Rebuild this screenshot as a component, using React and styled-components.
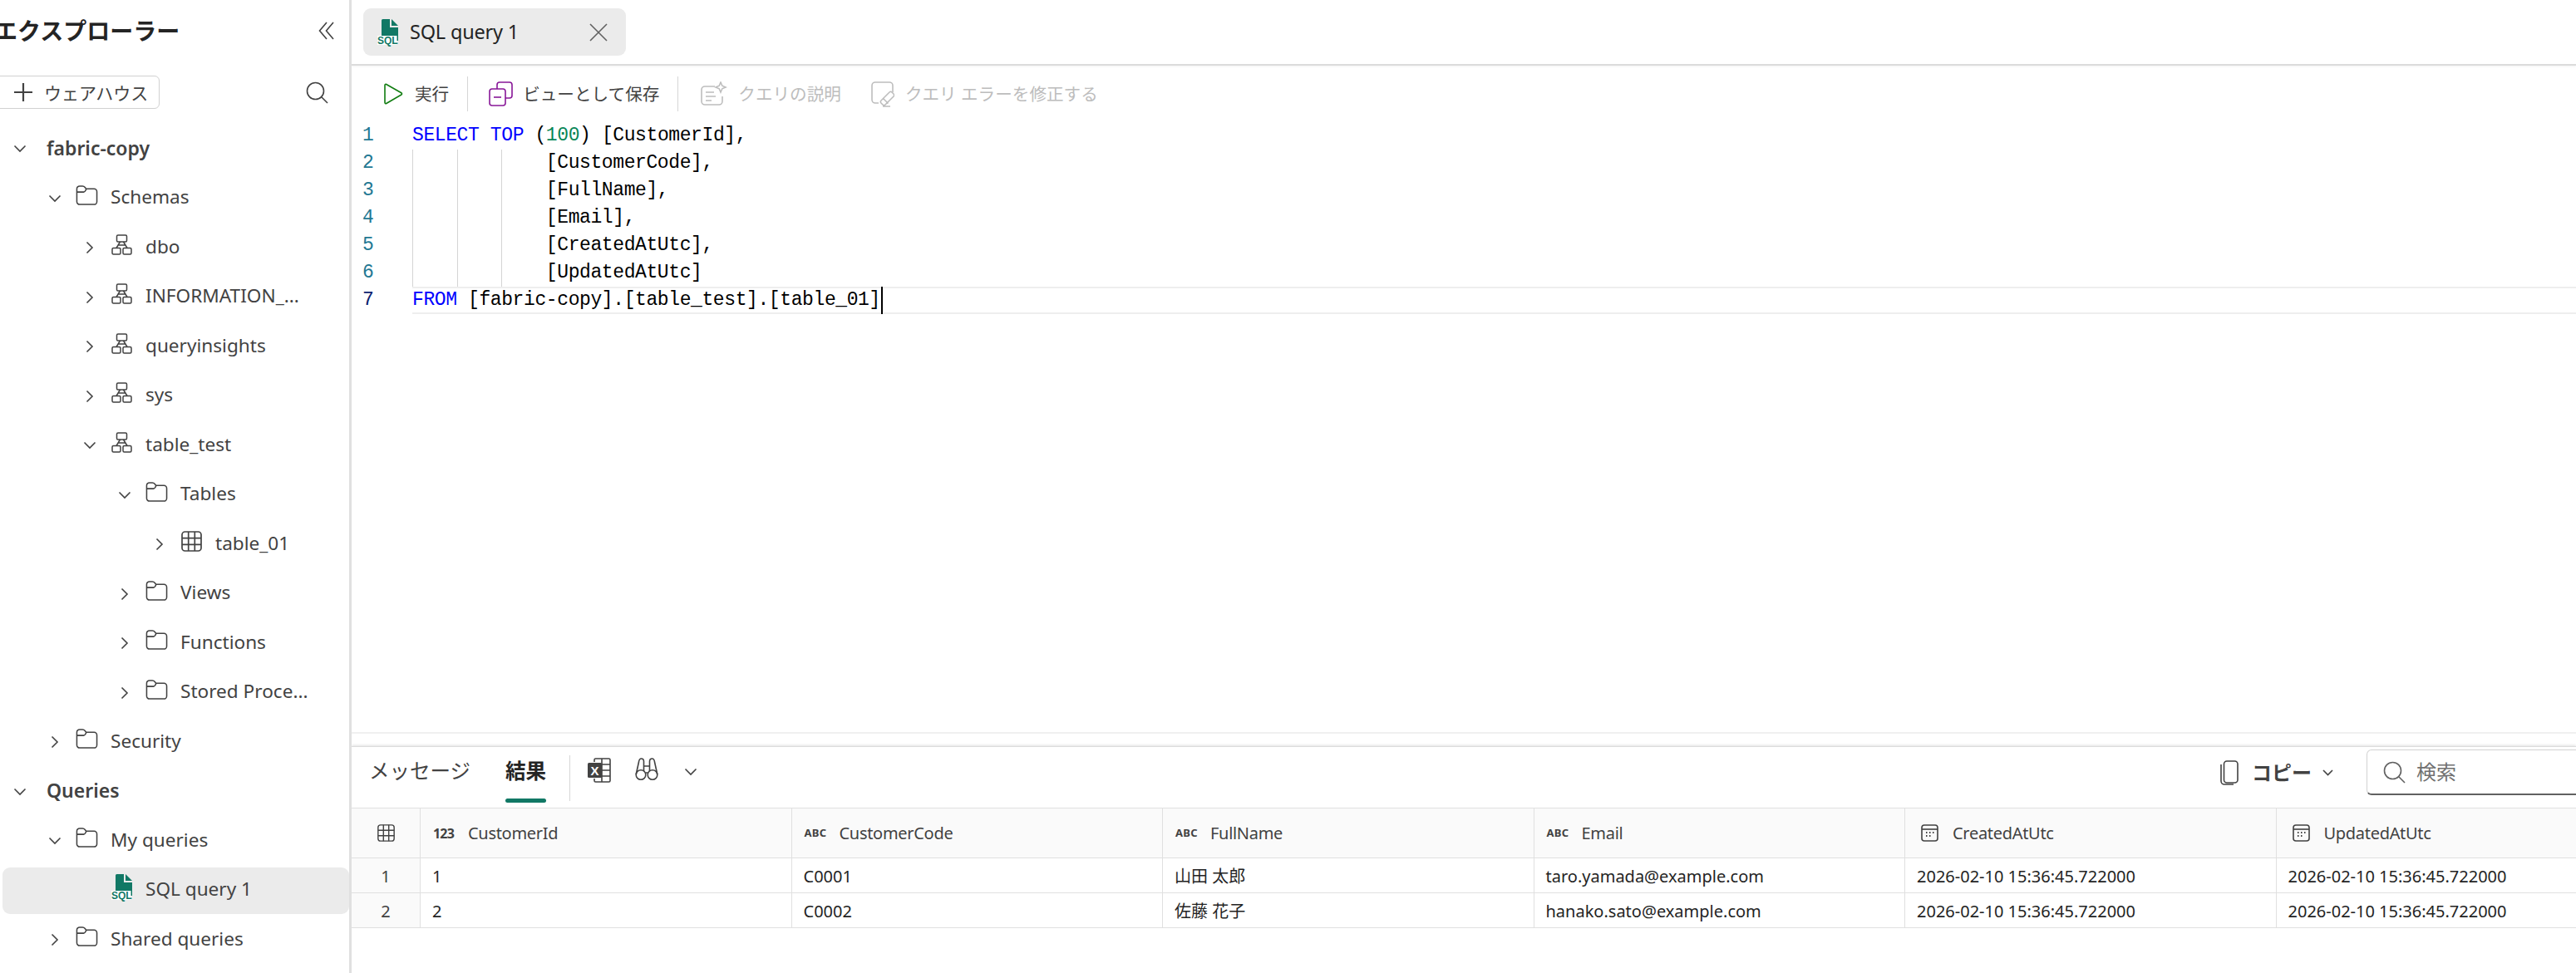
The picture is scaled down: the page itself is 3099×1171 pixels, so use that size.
import React from "react";
import styled, { createGlobalStyle } from "styled-components";

const UI = `"Noto Sans", "Noto Sans CJK JP", sans-serif`;
const MONO = `"Liberation Mono", "Noto Sans CJK JP", monospace`;

const Global = createGlobalStyle`
  html, body { margin: 0; padding: 0; height: 100%; overflow: hidden; background: #fff; }
  #root { height: 100%; }
  * { box-sizing: border-box; }
`;

const Page = styled.div`
  display: grid; grid-template-columns: 423px 1fr; width: 3099px; height: 1171px;
  overflow: hidden; font-family: ${UI}; color: #424242; background: #fff;
`;
const Sidebar = styled.aside`
  border-right: 3px solid #e0e0e0; display: flex; flex-direction: column; overflow: hidden;
`;
const SideHead = styled.div`
  height: 74px; display: flex; align-items: center; justify-content: space-between; padding-right: 18px;
`;
const Title = styled.h1`
  margin: 0 0 0 -7px; font-size: 28px; font-weight: 700; color: #242424; line-height: 1;
`;
const SideTools = styled.div`
  height: 75.5px; display: flex; align-items: center; justify-content: space-between; padding-right: 25px;
`;
const AddButton = styled.button`
  margin: -2px 0 0 -8px; width: 200px; height: 40px; padding: 0 0 0 24px; display: flex; align-items: center; gap: 14px;
  background: #fff; border: 1px solid #d1d1d1; border-radius: 6px; font: 400 21px ${UI}; color: #424242;
`;
const Row = styled.div`
  height: 59.5px; display: flex; align-items: center; flex: none;
  padding-left: ${p => 9 + p.$level * 42}px;
  ${p => p.$selected ? `margin: 1.75px 0 1.75px 3px; padding-left: ${6 + p.$level * 42}px; background: #ebebeb; border-radius: 9px; height: 56px;` : ""}
`;
const ChevronSlot = styled.span`
  width: 30px; height: 30px; display: flex; align-items: center; justify-content: center; flex: none;
`;
const IconSlot = styled.span`
  width: 27px; margin: 0 15px 0 10px; display: flex; justify-content: center; flex: none; transform: translateY(-4px);
`;
const RowLabel = styled.span`
  font-size: ${p => (p.$strong ? 23 : 22.6)}px; line-height: 1; color: #424242; white-space: nowrap;
  font-weight: ${p => (p.$strong ? 600 : 400)};
  margin-left: ${p => (p.$bare ? 17 : 0)}px;
  transform: translateY(-1px);
`;

const Main = styled.main` display: flex; flex-direction: column; min-width: 0; overflow: hidden; `;
const TabBar = styled.div`
  height: 79px; flex: none; display: flex; align-items: flex-start; padding: 10px 0 0 14px;
  border-bottom: 2px solid #dcdcdc; box-shadow: 0 1px 2px rgba(0,0,0,.06);
`;
const DocTab = styled.div`
  width: 316px; height: 57px; background: #ebebeb; border-radius: 9px; display: flex; align-items: center; padding: 0 22px 0 17px;
`;
const DocTabName = styled.span`
  font-size: 23.5px; letter-spacing: -0.2px; color: #242424; margin-left: 13px; flex: 1; line-height: 1;
`;
const Toolbar = styled.div`
  height: 68px; flex: none; display: flex; align-items: center; padding: 0 0 0 38px;
`;
const ToolButton = styled.div`
  display: flex; align-items: center; gap: ${p => p.$gap || 14}px; font-size: 20.6px; line-height: 1;
  color: ${p => (p.$disabled ? "#bdbdbd" : "#424242")}; margin-right: ${p => p.$mr || 0}px;
`;
const ToolDivider = styled.span`
  width: 1px; height: 42px; background: #d6d6d6; margin: 0 ${p => p.$r || 25}px 0 22px; flex: none;
`;

const Editor = styled.section`
  height: 736px; flex: none; border-bottom: 2px solid #f0f0f0;
  font: 400 23px/33px ${MONO}; letter-spacing: -0.4px;
`;
const CodeLine = styled.div` height: 33px; display: flex; `;
const LineNo = styled.span`
  width: 73px; flex: none; padding-left: 13px; color: ${p => (p.$active ? "#0b216f" : "#237893")};
`;
const CodeBody = styled.div`
  flex: 1; display: flex; white-space: pre; color: #000;
  ${p => p.$guides ? `background-image: linear-gradient(#d4d4d4,#d4d4d4),linear-gradient(#d4d4d4,#d4d4d4),linear-gradient(#d4d4d4,#d4d4d4);
    background-size: 1px 100%; background-repeat: no-repeat; background-position: 0 0, 54px 0, 107px 0;` : ""}
  ${p => p.$active ? `box-shadow: inset 0 2px 0 #eeeeee, inset 0 -2px 0 #eeeeee;` : ""}
`;
const Kw = styled.span` color: #0000ff; `;
const Num = styled.span` color: #098658; `;
const Caret = styled.span` width: 2px; height: 33px; background: #000; margin-left: 1px; flex: none; `;

const Results = styled.section`
  margin-top: 15px; flex: 1; min-height: 0; border-top: 1px solid #dcdcdc; box-shadow: 0 -1px 3px rgba(0,0,0,.12);
  display: flex; flex-direction: column;
`;
const ResultBar = styled.div`
  height: 73px; flex: none; display: flex; align-items: flex-start; padding-left: 21px;
`;
const ResultTab = styled.div`
  height: 58px; display: flex; align-items: center; font-size: 24.5px; line-height: 1; position: relative;
  font-weight: ${p => (p.$active ? 700 : 400)}; color: ${p => (p.$active ? "#242424" : "#424242")};
  margin-right: ${p => p.$mr}px;
  ${p => p.$active ? `&::after { content: ""; position: absolute; left: 0; right: 0; bottom: -9px; height: 5px; background: #117865; border-radius: 3px; }` : ""}
`;
const BarDivider = styled.span` width: 1px; height: 55px; margin: 10px 21px 0 0; background: #d6d6d6; flex: none; `;
const BarIcon = styled.span` margin: 13px ${p => p.$mr}px 0 0; display: flex; flex: none; `;
const BarRight = styled.div`
  margin: 3px -48px 0 auto; display: flex; align-items: flex-start;
`;
const CopyBtn = styled.div`
  display: flex; align-items: center; height: 55px; font-size: 24px; font-weight: 700; color: #424242; line-height: 1;
  margin-right: 40px;
`;
const CopyLabel = styled.span` margin: 0 13px 0 16px; `;
const SearchBox = styled.div`
  width: 300px; height: 55px; border: 1px solid #d1d1d1; border-bottom: 2px solid #616161; border-radius: 6px;
  display: flex; align-items: center; padding-left: 19px; gap: 13px; font-size: 24px; color: #707070; line-height: 1;
`;
const SmallChevron = styled.span` margin-top: 12px; display: flex; `;

const Grid = styled.div`
  display: grid; grid-template-columns: 83px repeat(6, 446.5px); width: max-content; border-top: 1px solid #e0e0e0;
`;
const HeadCell = styled.div`
  height: 60px; background: #fafafa; border-right: 1px solid #e0e0e0; border-bottom: 1px solid #e0e0e0;
  display: flex; align-items: center; font-size: 20px; letter-spacing: -0.3px; color: #424242; line-height: 1;
  justify-content: ${p => (p.$center ? "center" : "flex-start")};
`;
const TypeSlot = styled.span`
  width: 57px; flex: none; padding-left: ${p => p.$pl || 15}px; display: flex; align-items: center;
  font-size: ${p => p.$fs || 13}px; font-weight: 700; letter-spacing: ${p => p.$ls || 0}px; color: #424242;
`;
const Cell = styled.div`
  height: 42px; border-right: 1px solid #e0e0e0; border-bottom: 1px solid #e0e0e0; padding: 2px 0 0 14px;
  display: flex; align-items: center; font-size: 20px; color: #242424; line-height: 1; white-space: nowrap;
`;
const IndexCell = styled(Cell)` padding: 2px 0 0; justify-content: center; background: #fafafa; color: #424242; `;
const SqlSvg = styled.svg` margin-bottom: -4px; flex: none; `;

/* icons */
const Svg = ({ w, h, children, ...rest }) => (
  <svg width={w} height={h} viewBox={`0 0 ${w} ${h}`} fill="none" stroke="#424242" strokeWidth="1.6" {...rest}>{children}</svg>
);
const Chevron = ({ open }) => open
  ? <Svg w={16} h={10}><path d="M1.5 1.5 8 8l6.5-6.5" /></Svg>
  : <Svg w={10} h={16}><path d="M1.5 1.5 8 8l-6.5 6.5" /></Svg>;
const Folder = () => (
  <Svg w={28} h={26}>
    <path d="M1.5 5a3.5 3.5 0 0 1 3.500-3.500h3.500c1.500 0 2.400.6 3.200 1.600l1.300 1.900h10A3.500 3.500 0 0 1 26.500 8.500V21a3.500 3.500 0 0 1-3.500 3.500H5A3.500 3.500 0 0 1 1.500 21Z" />
    <path d="M1.500 9H10c1 0 1.800-.5 3.500-4" />
  </Svg>
);
const Schema = () => (
  <Svg w={25} h={25} strokeWidth="1.5">
    <rect x="6.5" y="1" width="12" height="8" rx="1.5" />
    <rect x="1" y="16.5" width="10" height="7.5" rx="1.5" />
    <rect x="14" y="16.5" width="10" height="7.5" rx="1.5" />
    <path d="M10.500 9 6 16.500M14.500 9 19 16.500M8.500 13h8" />
  </Svg>
);
const TableIcon = ({ s = 25 }) => (
  <svg width={s} height={s} viewBox="0 0 25 25" fill="none" stroke="#424242" strokeWidth="1.7">
    <rect x="1" y="1" width="23" height="23" rx="3.5" />
    <path d="M8.700 1v23M16.300 1v23M1 8.700h23M1 16.300h23" />
  </svg>
);
const SqlDoc = () => (
  <SqlSvg width="26" height="35" viewBox="0 0 26 35">
    <path d="M5 1.500A1.500 1.500 0 0 1 6.500 0H15v10h10v16H5Z" fill="#117865" />
    <path d="M17 0l8 8h-8Z" fill="#117865" />
    <rect x="0" y="20" width="23.500" height="11" fill="#fff" />
    <text x="0" y="30" fontFamily="Liberation Sans" fontWeight="700" fontSize="12" fill="#117865">SQL</text>
  </SqlSvg>
);
const SearchIcon = ({ c = "#424242" }) => (
  <Svg w={27} h={27} stroke={c}><circle cx="11.500" cy="11.500" r="10" /><path d="m18.500 18.500 7.500 7.500" /></Svg>
);
const Collapse = () => (
  <Svg w={19} h={22}><path d="M10 1 1.500 11 10 21M18 1 9.500 11 18 21" /></Svg>
);
const Plus = () => <Svg w={22} h={22} strokeWidth="2.2"><path d="M11 0v22M0 11h22" /></Svg>;
const Close = () => <Svg w={22} h={22} stroke="#616161"><path d="m1 1 20 20M21 1 1 21" /></Svg>;
const Play = () => <Svg w={24} h={26} stroke="#107c10"><path d="M2 2.500c0-1 1-1.400 1.800-1l18 10.300c.9.5.9 1.700 0 2.200l-18 10.500c-.8.4-1.800 0-1.800-1Z" /></Svg>;
const ViewSave = () => (
  <Svg w={29} h={30} stroke="#881798">
    <path d="M10 9V4a3 3 0 0 1 3-3h12a3 3 0 0 1 3 3v13a3 3 0 0 1-3 3h-5" />
    <rect x="1" y="9" width="19" height="20" rx="3" />
    <path d="M6 19h9" />
  </Svg>
);
const Sparkle = () => (
  <Svg w={32} h={30} stroke="#bdbdbd">
    <path d="M17 6H5a4 4 0 0 0-4 4v14a4 4 0 0 0 4 4h17a4 4 0 0 0 4-4v-6" />
    <path d="M6 13h10M6 18h12M6 23h7" />
    <path d="m24 1 1.800 4.200L30 7l-4.200 1.800L24 13l-1.800-4.200L18 7l4.200-1.800Z" />
  </Svg>
);
const Eraser = () => (
  <Svg w={28} h={31} stroke="#bdbdbd">
    <path d="M9 26H5a4 4 0 0 1-4-4V5a4 4 0 0 1 4-4h17a4 4 0 0 1 4 4v8" />
    <path d="m12 23 10-10a2 2 0 0 1 3 0l2 2a2 2 0 0 1 0 3L17 28a2 2 0 0 1-3 0l-2-2a2 2 0 0 1 0-3ZM14.500 20.500l6 6M14 30h9" />
  </Svg>
);
const Excel = () => (
  <svg width="28" height="30" viewBox="0 0 28 30" fill="none">
    <path d="M8 5V2.500A1.500 1.500 0 0 1 9.500 1h16A1.500 1.500 0 0 1 27 2.500v25a1.500 1.500 0 0 1-1.500 1.500h-16A1.500 1.500 0 0 1 8 27.500V25M17 1v28M17 8h10M17 15h10M17 22h10M8 22h9" stroke="#424242" strokeWidth="1.6" />
    <rect x="0" y="6" width="17" height="18" rx="1.500" fill="#424242" />
    <text x="3.500" y="20.500" fontFamily="Liberation Sans" fontWeight="700" fontSize="15" fill="#fff">X</text>
  </svg>
);
const Binoculars = () => (
  <Svg w={28} h={28}>
    <circle cx="7" cy="20.500" r="5.800" /><circle cx="21" cy="20.500" r="5.800" />
    <path d="M1.200 20 4.500 5c.4-3 1.500-4 3-4s3 1 3 3.500V16M26.800 20 23.500 5c-.4-3-1.500-4-3-4s-3 1-3 3.500V16M10.500 10h7M12.800 18h2.400" />
  </Svg>
);
const CopyIcon = () => (
  <Svg w={22} h={30}>
    <rect x="4.500" y="1" width="16.500" height="26" rx="3.500" />
    <path d="M1 5v20a4 4 0 0 0 4 4h11" />
  </Svg>
);
const Calendar = () => (
  <svg width="21" height="21" viewBox="0 0 21 21" fill="none" stroke="#424242" strokeWidth="1.6">
    <rect x="1" y="1" width="19" height="19" rx="3" />
    <path d="M1 6h19" />
    <path d="M6 10h1.500M10 10h1.500M14 10h1.500M6 14h1.500M10 14h1.500" strokeWidth="1.800" />
  </svg>
);

const tree = [
  { l: 0, open: true, label: "fabric-copy", strong: true },
  { l: 1, open: true, icon: "folder", label: "Schemas" },
  { l: 2, icon: "schema", label: "dbo" },
  { l: 2, icon: "schema", label: "INFORMATION_..." },
  { l: 2, icon: "schema", label: "queryinsights" },
  { l: 2, icon: "schema", label: "sys" },
  { l: 2, open: true, icon: "schema", label: "table_test" },
  { l: 3, open: true, icon: "folder", label: "Tables" },
  { l: 4, icon: "table", label: "table_01" },
  { l: 3, icon: "folder", label: "Views" },
  { l: 3, icon: "folder", label: "Functions" },
  { l: 3, icon: "folder", label: "Stored Proce..." },
  { l: 1, icon: "folder", label: "Security" },
  { l: 0, open: true, label: "Queries", strong: true },
  { l: 1, open: true, icon: "folder", label: "My queries" },
  { l: 2, icon: "sql", label: "SQL query 1", selected: true, noChevron: true },
  { l: 1, icon: "folder", label: "Shared queries" },
];
const icons = { folder: Folder, schema: Schema, table: TableIcon, sql: SqlDoc };

const cols = [
  { name: "CustomerId", type: "num" },
  { name: "CustomerCode", type: "abc" },
  { name: "FullName", type: "abc" },
  { name: "Email", type: "abc" },
  { name: "CreatedAtUtc", type: "date" },
  { name: "UpdatedAtUtc", type: "date" },
];
const ts = "2026-02-10 15:36:45.722000";
const rows = [
  ["1", "C0001", "山田 太郎", "taro.yamada@example.com", ts, ts],
  ["2", "C0002", "佐藤 花子", "hanako.sato@example.com", ts, ts],
];

const TypeIcon = ({ type }) => {
  if (type === "num") return <TypeSlot $fs={16} $ls={-0.8}>123</TypeSlot>;
  if (type === "abc") return <TypeSlot $fs={13} $ls={0.3}>ABC</TypeSlot>;
  return <TypeSlot $pl={19}><Calendar /></TypeSlot>;
};

export default function App() {
  return (
    <Page>
      <Global />
      <Sidebar>
        <SideHead><Title>エクスプローラー</Title><Collapse /></SideHead>
        <SideTools>
          <AddButton><Plus />ウェアハウス</AddButton>
          <SearchIcon />
        </SideTools>
        {tree.map(t => {
          const I = icons[t.icon];
          return (
            <Row key={t.label} $level={t.l} $selected={t.selected}>
              <ChevronSlot>{!t.noChevron && <Chevron open={t.open} />}</ChevronSlot>
              {I && <IconSlot><I /></IconSlot>}
              <RowLabel $strong={t.strong} $bare={!I}>{t.label}</RowLabel>
            </Row>
          );
        })}
      </Sidebar>
      <Main>
        <TabBar>
          <DocTab><SqlDoc /><DocTabName>SQL query 1</DocTabName><Close /></DocTab>
        </TabBar>
        <Toolbar>
          <ToolButton $gap={14}><Play />実行</ToolButton>
          <ToolDivider />
          <ToolButton $gap={12}><ViewSave />ビューとして保存</ToolButton>
          <ToolDivider $r={27} />
          <ToolButton $disabled $gap={13} $mr={36}><Sparkle />クエリの説明</ToolButton>
          <ToolButton $disabled $gap={13}><Eraser />クエリ エラーを修正する</ToolButton>
        </Toolbar>
        <Editor>
          <CodeLine><LineNo>1</LineNo><CodeBody><span><Kw>SELECT</Kw> <Kw>TOP</Kw> (<Num>100</Num>) [CustomerId],</span></CodeBody></CodeLine>
          {["[CustomerCode],", "[FullName],", "[Email],", "[CreatedAtUtc],", "[UpdatedAtUtc]"].map((c, i) => (
            <CodeLine key={c}><LineNo>{i + 2}</LineNo><CodeBody $guides><span>{"            " + c}</span></CodeBody></CodeLine>
          ))}
          <CodeLine><LineNo $active>7</LineNo><CodeBody $active><span><Kw>FROM</Kw> [fabric-copy].[table_test].[table_01]</span><Caret /></CodeBody></CodeLine>
        </Editor>
        <Results>
          <ResultBar>
            <ResultTab $mr={42}>メッセージ</ResultTab>
            <ResultTab $active $mr={28}>結果</ResultTab>
            <BarDivider />
            <BarIcon $mr={29}><Excel /></BarIcon>
            <BarIcon $mr={31}><Binoculars /></BarIcon>
            <BarIcon $mr={0}><SmallChevron><Chevron open /></SmallChevron></BarIcon>
            <BarRight>
              <CopyBtn>
                <CopyIcon /><CopyLabel>コピー</CopyLabel>
                <Svg w={13} h={8}><path d="M1 1l5.500 5.500L12 1" /></Svg>
              </CopyBtn>
              <SearchBox><SearchIcon c="#616161" />検索</SearchBox>
            </BarRight>
          </ResultBar>
          <Grid>
            <HeadCell $center><TableIcon s={21} /></HeadCell>
            {cols.map(c => (
              <HeadCell key={c.name}><TypeIcon type={c.type} />{c.name}</HeadCell>
            ))}
            {rows.map((r, i) => (
              <React.Fragment key={i}>
                <IndexCell>{i + 1}</IndexCell>
                {r.map((v, j) => <Cell key={j}>{v}</Cell>)}
              </React.Fragment>
            ))}
          </Grid>
        </Results>
      </Main>
    </Page>
  );
}
